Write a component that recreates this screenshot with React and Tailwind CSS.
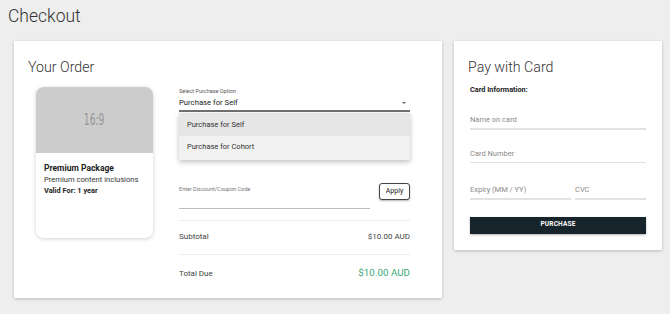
const font = { fontFamily: 'Roboto, "Noto Sans", sans-serif' };

function Divider() {
  return <div className="h-px bg-[#ececec]" />;
}

function CardField({ placeholder, className = '' }) {
  return (
    <div className={'flex flex-col ' + className}>
      <div className="text-[7.5px] leading-[10px] text-[#8a8a8a] pb-[3px]">{placeholder}</div>
      <div className="h-[1.5px] bg-[#e2e2e2]" />
    </div>
  );
}

export default function App() {
  return (
    <div className="min-h-[314px] bg-[#eeeeee] text-[#222]" style={font}>
      <h1 className="pl-[8px] pt-[4px] h-[41px] text-[17.5px] leading-[24px] font-light text-[#333]">Checkout</h1>

      <div className="flex items-start gap-[12px] pl-[14px] pr-[8px]">
        {/* Order card */}
        <div className="w-[428px] h-[257px] bg-white shadow-[0_1px_3px_rgba(0,0,0,0.22)] pt-[15px] px-[14px]">
          <h2 className="text-[14.2px] leading-[20px] font-light text-[#333] pt-[1px]">Your Order</h2>

          <div className="flex mt-[10px] pl-[8px] gap-[26px]">
            {/* product */}
            <div className="w-[117px] h-[151px] rounded-[8px] bg-white shadow-[0_1px_4px_rgba(0,0,0,0.18)] overflow-hidden">
              <div className="h-[66px] bg-[#cccccc] flex items-center justify-center">
                <span className="inline-block scale-x-[0.68] text-[15px] font-medium text-[#959595]" style={{ fontFamily: '"DejaVu Sans Condensed", "Liberation Sans", sans-serif' }}>16:9</span>
              </div>
              <div className="px-[8px] pt-[9px]">
                <div className="text-[8.5px] leading-[12px] font-bold text-[#222]">Premium Package</div>
                <div className="text-[7.6px] leading-[11px] text-[#333]">Premium content inclusions</div>
                <div className="text-[7.4px] leading-[11px] font-bold text-[#222]">Valid For: 1 year</div>
              </div>
            </div>

            {/* options */}
            <div className="w-[231px] flex flex-col">
              <div className="relative">
                <div className="text-[5.5px] leading-[8px] text-[#555]">Select Purchase Option</div>
                <div className="flex items-center justify-between pt-[2px] pb-[2px]">
                  <span className="text-[7.7px] leading-[11px] text-[#222]">Purchase for Self</span>
                  <span className="mr-[4px] w-0 h-0 border-l-[2.5px] border-r-[2.5px] border-t-[2.5px] border-l-transparent border-r-transparent border-t-[#666]" />
                </div>
                <div className="h-[1.5px] bg-[#707070]" />

                <div className="absolute left-0 right-0 top-[26px] z-10 bg-[#f1f1f1] shadow-[0_2px_5px_rgba(0,0,0,0.25)] pb-[2px]">
                  <div className="h-[23px] flex items-center pl-[8px] bg-[#e6e6e6] text-[7.5px] text-[#333]">Purchase for Self</div>
                  <div className="h-[22px] flex items-center pl-[8px] text-[7.5px] text-[#333]">Purchase for Cohort</div>
                </div>
              </div>

              <div className="flex items-start justify-between mt-[73px]">
                <div className="w-[191px]">
                  <div className="text-[5.5px] leading-[8px] text-[#777]">Enter Discount/Coupon Code</div>
                  <div className="h-[15px]" />
                  <div className="h-px bg-[#bdbdbd]" />
                </div>
                <button className="mt-[-2px] w-[31px] h-[17px] border-[1.5px] border-[#444] rounded-[3px] bg-white text-[7px] text-[#222] shadow-[0_1px_2px_rgba(0,0,0,0.3)] flex items-center justify-center">Apply</button>
              </div>

              <div className="mt-[11px]"><Divider /></div>
              <div className="h-[33px] flex items-center justify-between text-[8px] text-[#444]">
                <span>Subtotal</span>
                <span>$10.00 AUD</span>
              </div>
              <Divider />
              <div className="h-[38px] flex items-center justify-between">
                <span className="text-[8px] text-[#444]">Total Due</span>
                <span className="text-[9.8px] text-[#3aa976]">$10.00 AUD</span>
              </div>
            </div>
          </div>
        </div>

        {/* Card payment */}
        <div className="w-[208px] h-[209px] bg-white shadow-[0_1px_3px_rgba(0,0,0,0.22)] pt-[15px] pl-[14px] pr-[16px]">
          <h2 className="text-[14.2px] leading-[20px] font-light text-[#333] pt-[1px]">Pay with Card</h2>
          <div className="pl-[2px]">
            <div className="mt-[8px] text-[7.3px] leading-[10px] font-bold text-[#222]">Card Information:</div>
            <CardField placeholder="Name on card" className="mt-[20px]" />
            <CardField placeholder="Card Number" className="mt-[19px]" />
            <div className="flex gap-[4px] mt-[22px]">
              <CardField placeholder="Expiry (MM / YY)" className="w-[101px]" />
              <CardField placeholder="CVC" className="flex-1" />
            </div>
            <button className="mt-[17px] w-full h-[17px] bg-[#17242c] text-white text-[6.5px] font-bold tracking-[0.2px] shadow-[0_1px_2px_rgba(0,0,0,0.3)]">PURCHASE</button>
          </div>
        </div>
      </div>
    </div>
  );
}
